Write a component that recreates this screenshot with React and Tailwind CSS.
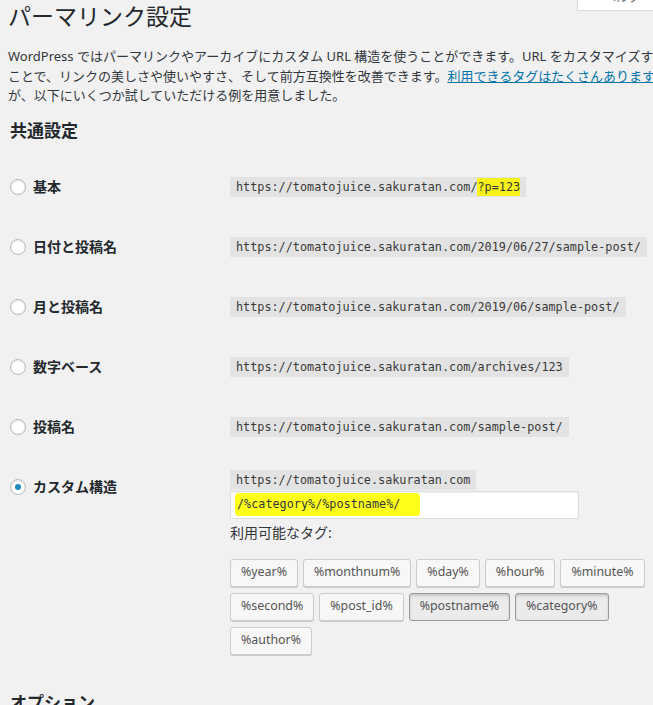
import React from 'react';

const SANS = { fontFamily: '"Noto Sans", "Noto Sans CJK JP", sans-serif' };
const MONO = { fontFamily: '"DejaVu Sans Mono", "Liberation Mono", monospace' };

const HOST = 'https://tomatojuice.sakuratan.com';

const options = [
  { key: 'plain', label: '基本', url: `${HOST}/`, mark: '?p=123' },
  { key: 'day', label: '日付と投稿名', url: `${HOST}/2019/06/27/sample-post/` },
  { key: 'month', label: '月と投稿名', url: `${HOST}/2019/06/sample-post/` },
  { key: 'numeric', label: '数字ベース', url: `${HOST}/archives/123` },
  { key: 'post', label: '投稿名', url: `${HOST}/sample-post/` },
];

const tags = [
  ['%year%', '%monthnum%', '%day%', '%hour%', '%minute%'],
  ['%second%', '%post_id%', '%postname%', '%category%'],
  ['%author%'],
];
const activeTags = ['%postname%', '%category%'];

function Radio({ checked }) {
  return (
    <span className="w-4 h-4 shrink-0 rounded-full border border-[#b4b9be] bg-white shadow-[inset_0_1px_2px_rgba(0,0,0,0.1)] flex items-center justify-center">
      {checked && <span className="w-[6px] h-[6px] rounded-full bg-[#1e8cbe]" />}
    </span>
  );
}

function Label({ text, checked }) {
  return (
    <div className="w-[222px] shrink-0 pl-[2px] flex items-center gap-[7px] h-5">
      <Radio checked={checked} />
      <span className="text-[14px] font-semibold text-[#23282d]">{text}</span>
    </div>
  );
}

function Code({ children }) {
  return (
    <code
      className="inline-block h-5 leading-5 px-[6px] bg-[#e3e3e3] text-[11.8px] text-[#3a3a3a]"
      style={MONO}
    >
      {children}
    </code>
  );
}

export default function App() {
  return (
    <div className="relative w-[653px] h-[705px] overflow-hidden bg-[#f1f1f1] text-[#23282d]" style={SANS}>
      {/* help tab hanging from the top edge */}
      <div className="absolute top-0 right-0 w-[76px] h-[11px] bg-white border-l border-b border-[#dcdcdc] overflow-hidden">
        <span className="block -mt-[9px] pl-[26px] text-[12px] leading-[14px] text-[#72777c]">ヘルプ</span>
      </div>

      <div className="w-[700px] pl-2 whitespace-nowrap">
        <h1 className="mt-[2px] text-[23px] leading-[29px] font-normal text-[#23282d]">パーマリンク設定</h1>

        <div className="mt-4 text-[13px] leading-[19.5px] text-[#32373c]">
          <div>WordPress ではパーマリンクやアーカイブにカスタム URL 構造を使うことができます。URL をカスタマイズする</div>
          <div>
            ことで、リンクの美しさや使いやすさ、そして前方互換性を改善できます。
            <a className="text-[#0073aa] underline">利用できるタグはたくさんあります</a>
          </div>
          <div>が、以下にいくつか試していただける例を用意しました。</div>
        </div>

        <h2 className="mt-[14px] pl-[2px] text-[17px] leading-[22px] font-semibold">共通設定</h2>

        <div className="mt-[15px]">
          {options.map((o) => (
            <div key={o.key} className="h-[60px] flex items-center">
              <Label text={o.label} />
              <Code>
                {o.url}
                {o.mark && <span className="bg-[#f7f21a] py-[2px]">{o.mark}</span>}
              </Code>
            </div>
          ))}

          {/* custom structure */}
          <div className="flex pt-[20px]">
            <Label text="カスタム構造" checked />
            <div className="-mt-[11px]">
              <Code>{HOST}</Code>
              <div className="mt-px w-[349px] h-[28px] bg-white border border-[#dddddd] shadow-[inset_0_1px_2px_rgba(0,0,0,0.07)] flex items-center px-[4px]">
                <span className="pl-[2px] pr-[20px] py-[3px] bg-[#ffff1a] rounded-sm text-[11.8px] text-[#32373c]" style={MONO}>
                  /%category%/%postname%/
                </span>
              </div>
              <p className="mt-1 text-[14px] leading-5 text-[#32373c]">利用可能なタグ:</p>
              <div className="mt-[16px] flex flex-col gap-[6px]">
                {tags.map((row, i) => (
                  <div key={i} className="flex gap-[5px]">
                    {row.map((t) => {
                      const on = activeTags.includes(t);
                      return (
                        <button
                          key={t}
                          className={`h-[28px] px-[10px] rounded-[3px] border text-[12.4px] text-[#555] ${
                            on
                              ? 'bg-[#ebebeb] border-[#999] shadow-[inset_0_2px_5px_-3px_rgba(0,0,0,0.5)]'
                              : 'bg-[#f7f7f7] border-[#cccccc] shadow-[0_1px_0_#cccccc]'
                          }`}
                        >
                          {t}
                        </button>
                      );
                    })}
                  </div>
                ))}
              </div>
            </div>
          </div>
        </div>

        <h2 className="mt-[37px] pl-[2px] text-[17px] leading-[22px] font-semibold">オプション</h2>
      </div>
    </div>
  );
}
